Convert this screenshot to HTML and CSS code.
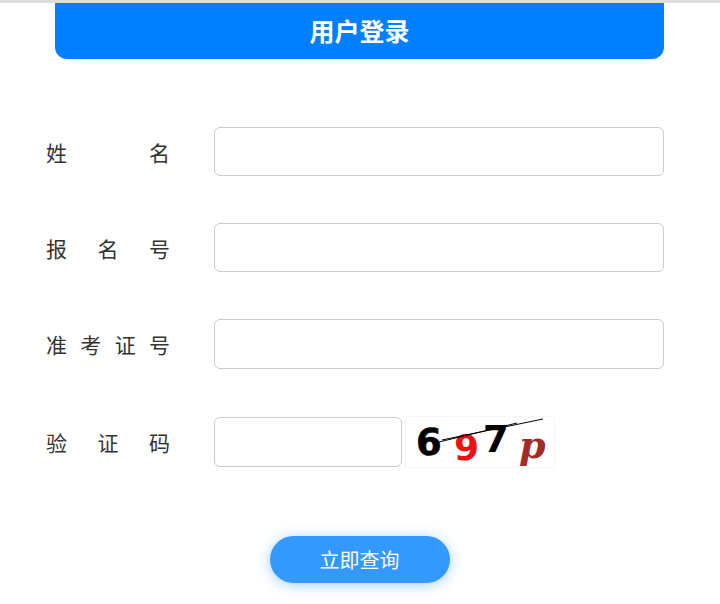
FILE: index.html
```html
<!DOCTYPE html>
<html lang="zh-CN">
<head>
    <meta charset="UTF-8">
    <title>用户登录</title>
    <link rel="stylesheet" href="styles.css">
</head>
<body>
    <div class="topline"></div>
    <div class="container">
        <h1 class="title">用户登录</h1>

        <form class="login-form">
            <div class="row">
                <label for="name">姓名</label>
                <input type="text" id="name">
            </div>
            <div class="row">
                <label for="number">报名号</label>
                <input type="text" id="number">
            </div>
            <div class="row row-tall">
                <label for="card">准考证号</label>
                <input type="text" id="card">
            </div>
            <div class="row row-tall row-code">
                <label for="code">验证码</label>
                <input type="text" id="code" class="code-input">
                <svg class="captcha" width="150" height="52" viewBox="0 0 150 52">
                    <rect x="0.5" y="0.5" width="149" height="51" fill="#fff" stroke="#f6f6f6"/>
                    <text x="11" y="39" class="ch ch-six">6</text>
                    <text x="49" y="44" class="ch ch-nine">9</text>
                    <text x="78" y="36" class="ch ch-seven">7</text>
                    <text x="114" y="42" class="ch ch-p">p</text>
                    <path d="M37 24 L138 3" stroke="#000" stroke-width="1" fill="none"/>
                    <path d="M34 26 L112 7" stroke="#000" stroke-width="1" fill="none"/>
                </svg>
            </div>
            <div class="actions">
                <button type="button" class="submit-btn">立即查询</button>
            </div>
        </form>
    </div>
</body>
</html>
```

FILE: styles.css
```css
* {
    margin: 0;
    padding: 0;
    box-sizing: border-box;
}

body {
    font-family: "Noto Sans CJK SC", "Liberation Sans", sans-serif;
    background-color: #fff;
    color: #333;
}

.topline {
    height: 3px;
    background-color: #ddd;
}

.container {
    width: 609px;
    margin-left: 55px;
}

.title {
    height: 56px;
    line-height: 54px;
    text-align: center;
    font-size: 25px;
    font-weight: 700;
    color: #fff;
    background-color: #0080ff;
    border-radius: 0 0 12px 12px;
}

.login-form {
    padding-top: 68px;
    padding-bottom: 21px;
}

.row {
    display: flex;
    align-items: center;
    height: 49px;
    margin-bottom: 47px;
    margin-left: -9px;
}

.row label {
    width: 124px;
    margin-right: 44px;
    font-size: 21px;
    font-weight: 400;
    color: #333;
    text-align: justify;
    text-align-last: justify;
}

.row input {
    width: 450px;
    height: 49px;
    border: 1px solid #ccc;
    border-radius: 6px;
    font-size: 16px;
    outline: none;
}

.row-tall {
    height: 50px;
}

.row-tall input {
    height: 50px;
}

.row-code {
    margin-top: 48px;
    margin-bottom: 69px;
}

.row input.code-input {
    width: 188px;
    margin-right: 3px;
}

.captcha {
    display: block;
}

.ch {
    font-family: "DejaVu Sans", sans-serif;
    font-weight: 700;
}

.ch-six { font-size: 37px; fill: #000; stroke: #000; stroke-width: 0.6; }
.ch-nine { font-size: 36px; fill: #ee1111; }
.ch-seven { font-size: 37px; fill: #000; }
.ch-p { font-family: "DejaVu Serif", serif; font-size: 38px; font-style: italic; fill: #a52a2a; }

.actions {
    display: flex;
    justify-content: center;
}

.submit-btn {
    width: 180px;
    height: 47px;
    border: none;
    border-radius: 24px;
    background-color: #3399ff;
    color: #fff;
    font-family: inherit;
    font-size: 20px;
    font-weight: 400;
    box-shadow: 0 2px 14px rgba(51, 153, 255, 0.45);
    cursor: pointer;
}
```
